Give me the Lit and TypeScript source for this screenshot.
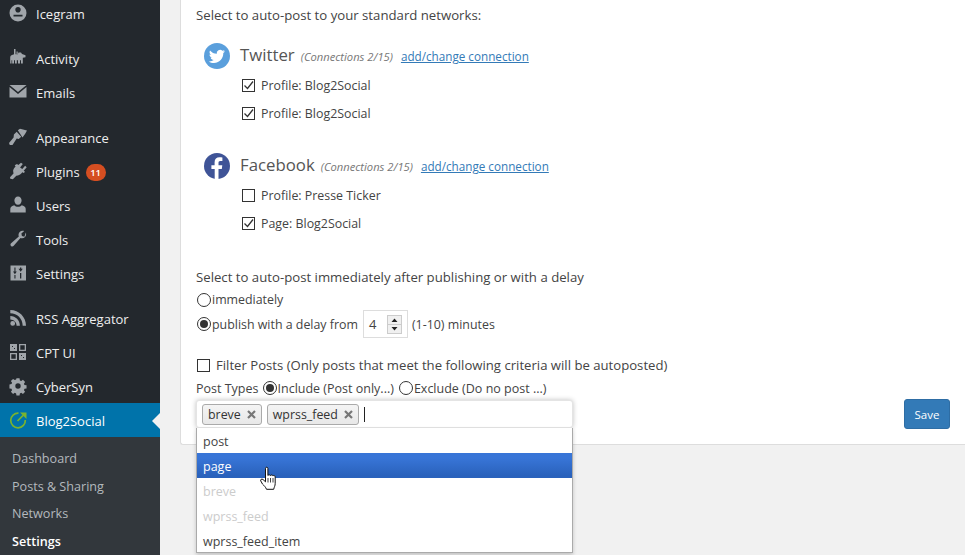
import { LitElement, html, css, svg } from "lit";
import { customElement } from "lit/decorators.js";

const icons: Record<string, unknown> = {
  icegram: svg`<path fill-rule="evenodd" d="M10 1.500a8.500 8.500 0 1 0 0 17 8.500 8.500 0 0 0 0-17zM7.300 6.700a2.700 2.700 0 0 1 5.400 0c0 1.500-1.200 2.900-2.700 2.900S7.300 8.200 7.300 6.700zM5.500 11.800h9v1.600h-9z"/>`,
  activity: svg`<path d="M6 1h1.500v5.300H6zM8.500 3.500h1.200v2.800H8.500zM2.500 8c1-1.200 3-1.700 5.500-1.700l1.700.2.800-2h2.500l1 1.500 3.500 1.300v1.900l-2.700.6v5.700h-1.800v-3.200h-1v3.200H10v-3.200H8.800v3.200H7v-3.200H6v3.200H4.200v-3.200H3.500v3.200H2.200V9.500z"/>`,
  mail: svg`<path d="M1.500 3h17L10 10zM1.500 5l8.500 7 8.500-7v10.500h-17z"/>`,
  brush: svg`<path d="M9.800 3.300L12 1.800l7 1.700-1.800 3.300-2.700 3.800zM8.700 4.800l4.500 5-2.500 2.200-2-.4-4.200 6.400H1.800L1 16l4.600-5.400.3-3z"/>`,
  plug: svg`<path d="M13 1.800l1.800 1.200-2.700 3.400 2.200 1.700 2.800-3.300 1.600 1.400-3 3.500 1.300 1-1.200 1.300-1.400-.7c-1 1.500-2.800 3-4.600 3.100l-1.500.3-3.400 3.500-2.600-.5-.3-1.500 3.500-3.800-.4-2.600c.2-1.500 1.200-3 2.500-4.300l-.9-1.300L9 2.900l1.300 1z"/>`,
  user: svg`<path d="M10 1.500c2.200 0 3.600 1.800 3.600 4s-1.400 4.300-3.600 4.300-3.600-2.100-3.600-4.300 1.400-4 3.600-4zM6.300 10.200c1 1 2.200 1.500 3.700 1.500s2.700-.5 3.700-1.500c2 .5 4 1.700 4 3.500v3.800H2.300v-3.800c0-1.800 2-3 4-3.500z"/>`,
  tool: svg`<path d="M17.800 3.600c.6 1.500.4 3.300-.8 4.500-1.200 1.200-3 1.500-4.500.9L5.700 16.800c-.7.800-1.900.9-2.700.1-.8-.8-.7-2 .1-2.700l7.700-6.800c-.6-1.500-.3-3.300.9-4.500 1.200-1.200 3-1.400 4.500-.8l-2.800 2.500.5 2.500 2.500.7z"/>`,
  settings: svg`<path fill-rule="evenodd" d="M2.500 2.500h15.500v15H2.500zM6.400 4.500v4H5l1.900 2.800L8.800 8.500H7.500v-4zM12 4.500v1.300h-1.500l2.200 3 2.100-3h-1.500V4.500zM6.400 12v3.500h1.100V12zM12 10v5.500h1.300V10z"/>`,
  rss: svg`<path d="M2.300 2c8.700 0 15.700 7 15.700 15.700h-3.300C14.700 10.800 9.200 5.300 2.300 5.300zM2.300 8.100c5.300 0 9.600 4.300 9.600 9.600H8.600c0-3.500-2.800-6.300-6.300-6.300zM4.700 13a2.400 2.400 0 1 1 0 4.800 2.400 2.400 0 0 1 0-4.800z"/>`,
  cpt: svg`<path fill-rule="evenodd" d="M2 2h7v7H2zM4 4v1h1V4zM6 6v1h1V6zM11 2h7v7h-7zM12.300 3.300v4.400h4.400V3.300zM2 11h7v7H2zM3.300 12.300v4.400h4.400v-4.400zM11 11h7v7h-7zM13 13v1h1v-1zM15 15v1h1v-1z"/>`,
  gear: svg`<path fill-rule="evenodd" d="M8.300 1.500h3.400l.4 2.300 1.500.6 1.900-1.300 2.400 2.400-1.300 1.900.6 1.500 2.300.4v3.400l-2.300.4-.6 1.500 1.300 1.900-2.400 2.400-1.900-1.300-1.500.6-.4 2.300H8.300l-.4-2.300-1.500-.6-1.900 1.300-2.400-2.400 1.300-1.900-.6-1.500-2.300-.4V8.300l2.300-.4.6-1.500L2.100 4.500 4.500 2.100l1.900 1.300 1.500-.6zM10 7a3 3 0 1 0 0 6 3 3 0 0 0 0-6z" transform="translate(1 1) scale(.9)"/>`,
};

type Item = { icon: string; label: string; badge?: string; gap?: boolean };
const menu: Item[] = [
  { icon: "icegram", label: "Icegram", gap: true },
  { icon: "activity", label: "Activity" },
  { icon: "mail", label: "Emails", gap: true },
  { icon: "brush", label: "Appearance" },
  { icon: "plug", label: "Plugins", badge: "11" },
  { icon: "user", label: "Users" },
  { icon: "tool", label: "Tools" },
  { icon: "settings", label: "Settings", gap: true },
  { icon: "rss", label: "RSS Aggregator" },
  { icon: "cpt", label: "CPT UI" },
  { icon: "gear", label: "CyberSyn" },
];

const check = (on: boolean, label: string) => html`
  <div class="prof">
    <span class="cb">${on
      ? svg`<svg width="11" height="11" viewBox="0 0 11 11"><path d="M1.500 5.500l3 3 5.500-7" fill="none" stroke="#333" stroke-width="1.300"/></svg>`
      : ""}</span>
    <span>${label}</span>
  </div>`;

const radio = (on: boolean) => html`<span class="radio ${on ? "on" : ""}"></span>`;
const cross = svg`<svg width="11" height="11" viewBox="0 0 11 11"><path d="M2 2l7 7M9 2l-7 7" stroke="#777" stroke-width="2.200"/></svg>`;

@customElement("app-root")
export class AppRoot extends LitElement {
  static styles = css`
    :host { display: block; width: 965px; height: 555px; overflow: hidden; background: #f1f1f1;
      font-family: "Open Sans", "Noto Sans", sans-serif; font-size: 12.400px; color: #444; }
    * { box-sizing: border-box; }
    .layout { display: flex; height: 555px; overflow: hidden; }
    .side { width: 160px; flex: none; background: #23282d; color: #eee; font-size: 13px; height: 555px; overflow: hidden; }
    .menu { margin-top: -4px; }
    .mi { display: flex; align-items: center; height: 34px; padding-top: 2px; }
    .mi.gap { margin-bottom: 11px; }
    .mi svg { width: 20px; height: 20px; margin-left: 8px; margin-right: 8px; fill: #a0a5aa; flex: none; position: relative; top: -1px; }
    .mi.active { background: #0073aa; color: #fff; position: relative; }
    .mi.active::after { content: ""; position: absolute; right: 0; top: 10px; border: 8px solid transparent; border-right-color: #f1f1f1; border-left: 0; }
    .badge { display: inline-flex; align-items: center; justify-content: center; width: 20px; height: 17px; margin-left: 6px; border-radius: 9px; background: #d54e21; color: #fff; font-size: 9.500px; font-weight: 600; }
    .sub { background: #32373c; padding-top: 8px; height: 118px; font-size: 12.600px; color: #b4b9be; }
    .sub div { height: 27.500px; line-height: 27.500px; padding-left: 12px; }
    .sub .cur { color: #fff; font-weight: 600; }

    .main { flex: 1; min-width: 0; padding-left: 20px; height: 445px; }
    .panel { position: relative; height: 445px; background: #fff; border-left: 1px solid #ddd; border-bottom: 1px solid #ddd; border-radius: 0 0 0 3px; padding: 5px 15px 0 15px; }
    .head { height: 20px; line-height: 20px; font-size: 13.200px; }
    .net { margin: 17px 0 0 7px; }
    .net + .net { margin-top: 25px; }
    .nethead { display: flex; align-items: center; height: 28px; }
    .logo { width: 28px; height: 28px; flex: none; margin-right: 9px; }
    .netname { font-size: 16.800px; color: #555; line-height: 24px; margin: 0 6px 3px 0; }
    .conn { font-size: 11.200px; font-style: italic; color: #777; margin-right: 8px; }
    a { font-size: 11.700px; color: #337ab7; text-decoration: underline; }
    .prof { display: flex; align-items: center; gap: 6px; height: 28px; margin-left: 39px; }
    .profs { margin-top: 1px; }
    .cb { width: 13px; height: 13px; border: 1px solid #333; background: #fff; flex: none; display: flex; align-items: center; justify-content: center; }
    .radio { width: 14px; height: 14px; border-radius: 50%; border: 1px solid #333; background: #fff; flex: none; position: relative; display: inline-block; margin-right: 1px; }
    .radio.on::after { content: ""; position: absolute; inset: 2px; border-radius: 50%; background: #333; }
    .delay { margin-top: 30px; }
    .row { display: flex; align-items: center; margin-left: 1px; }
    .r1 { height: 21px; margin-top: 2px; }
    .r2 { height: 28px; }
    .num { display: flex; align-items: center; width: 45px; height: 28px; margin: 0 4px 0 5px; padding-left: 5px; border: 1px solid #ddd; font-size: 13px; }
    .num span { flex: 1; }
    .spin { width: 15px; height: 19px; margin-right: 5px; flex: none; display: block; }
    .filter { display: flex; align-items: center; gap: 6px; height: 20px; margin: 17px 0 0 1px; font-size: 13.150px; }
    .types { display: flex; align-items: center; height: 22px; margin-top: 2px; font-size: 12.500px; }
    .types .lab { margin-right: 5px; }
    .opt { display: flex; align-items: center; margin-right: 5px; }
    .opt .radio { margin-right: 0; }
    .opt + .opt .radio { margin-right: 1px; }
    .chosen { position: absolute; left: 15px; top: 400px; }
    .field { display: flex; align-items: center; gap: 5px; width: 377px; height: 28px; padding-left: 5px; background: #fff; border: 1px solid #e4e4e4; border-radius: 3px; box-shadow: 0 0 5px rgba(0,0,0,.25); }
    .tag { display: flex; align-items: center; justify-content: space-between; height: 21px; padding: 0 4px 0 5px; border: 1px solid #aaa; border-radius: 3px; background: linear-gradient(#f4f4f4, #e8e8e8); color: #333; font-size: 12.400px; }
    .tag svg { margin-left: 5px; }
    .caret { width: 1px; height: 15px; background: #222; }
    .drop { width: 377px; height: 125px; background: #fff; border: 1px solid #aaa; border-top: 0; box-shadow: 0 2px 4px rgba(0,0,0,.2); font-size: 12.500px; color: #444; }
    .drop div { height: 25px; line-height: 27px; padding-left: 6px; }
    .drop .hi { background: linear-gradient(#3875d7 20%, #2a62bc 90%); color: #fff; }
    .drop .off { color: #ccc; }
    .hand { position: absolute; left: 79px; top: 466px; width: 18px; height: 26px; }
    .save { position: absolute; left: 723px; top: 399px; width: 46px; height: 30px; background: #337ab7; border: 1px solid #2e6da4; border-radius: 3px; color: #fff; font-size: 11.500px; display: flex; align-items: center; justify-content: center; }
  `;

  render() {
    return html`
      <div class="layout">
        <nav class="side">
          <div class="menu">
            ${menu.map(
              (m) => html`
                <div class="mi ${m.gap ? "gap" : ""}">
                  <svg viewBox="0 0 20 20">${icons[m.icon]}</svg>
                  <span>${m.label}</span>
                  ${m.badge ? html`<span class="badge">${m.badge}</span>` : ""}
                </div>`
            )}
            <div class="mi active">
              <svg viewBox="0 0 20 20" style="fill:none">
                <path d="M10.500 3.200A7.300 7.300 0 1 0 17.300 10" stroke="#7ab32e" stroke-width="1.700" fill="none"/>
                <path d="M9.500 11l6-6" stroke="#7ab32e" stroke-width="1.700" fill="none"/>
                <path d="M12 2.500h6.500V9z" fill="#7ab32e"/>
              </svg>
              <span>Blog2Social</span>
            </div>
          </div>
          <div class="sub">
            <div>Dashboard</div>
            <div>Posts &amp; Sharing</div>
            <div>Networks</div>
            <div class="cur">Settings</div>
          </div>
        </nav>
        <main class="main">
          <section class="panel">
            <div class="head">Select to auto-post to your standard networks:</div>

            <div class="net">
              <div class="nethead">
                <svg class="logo" viewBox="0 0 28 28">
                  <circle cx="14" cy="14" r="13" fill="#5a9fdc"/>
                  <path fill="#fff" d="M22 9.300c-.6.300-1.200.4-1.900.5.700-.4 1.200-1 1.400-1.800-.6.400-1.300.6-2.100.8a3.300 3.300 0 0 0-5.600 3c-2.700-.1-5.100-1.400-6.800-3.400-.9 1.500-.4 3.400 1 4.400-.5 0-1-.2-1.500-.4 0 1.600 1.100 2.900 2.600 3.200-.5.100-1 .2-1.500.1.400 1.300 1.600 2.200 3.100 2.300-1.400 1.100-3.200 1.600-4.900 1.400 1.500 1 3.200 1.500 5.100 1.500 6.100 0 9.600-5.200 9.400-9.900.7-.5 1.200-1 1.700-1.700z"/>
                </svg>
                <span class="netname">Twitter</span>
                <span class="conn">(Connections 2/15)</span>
                <a>add/change connection</a>
              </div>
              <div class="profs">
                ${check(true, "Profile: Blog2Social")}
                ${check(true, "Profile: Blog2Social")}
              </div>
            </div>

            <div class="net">
              <div class="nethead">
                <svg class="logo" viewBox="0 0 28 28">
                  <circle cx="14" cy="14" r="13" fill="#3f5497"/>
                  <path fill="#fff" d="M15.500 27v-10h3.300l.5-3.800h-3.800v-2.400c0-1.100.3-1.900 1.900-1.900h2V5.500c-.4 0-1.500-.2-2.900-.2-2.900 0-4.900 1.800-4.900 5v3H8.400V17h3.300v10z"/>
                </svg>
                <span class="netname">Facebook</span>
                <span class="conn">(Connections 2/15)</span>
                <a>add/change connection</a>
              </div>
              <div class="profs">
                ${check(false, "Profile: Presse Ticker")}
                ${check(true, "Page: Blog2Social")}
              </div>
            </div>

            <div class="delay head">Select to auto-post immediately after publishing or with a delay</div>
            <div class="row r1">${radio(false)}<span>immediately</span></div>
            <div class="row r2">
              ${radio(true)}<span>publish with a delay from</span>
              <span class="num">
                <span>4</span>
                <svg class="spin" viewBox="0 0 15 19">
                  <rect x=".5" y=".5" width="14" height="18" fill="#f0f0f0" stroke="#ccc"/>
                  <line x1="0" y1="9.500" x2="15" y2="9.500" stroke="#ccc"/>
                  <path d="M7.500 3.500l3 3.500h-6zM7.500 15.500l3-3.500h-6z" fill="#222"/>
                </svg>
              </span>
              <span>(1-10) minutes</span>
            </div>
            <div class="filter">
              <span class="cb"></span>
              <span>Filter Posts (Only posts that meet the following criteria will be autoposted)</span>
            </div>
            <div class="types">
              <span class="lab">Post Types</span>
              <span class="opt">${radio(true)}<span>Include (Post only...)</span></span>
              <span class="opt">${radio(false)}<span>Exclude (Do no post ...)</span></span>
            </div>

            <div class="chosen">
              <div class="field">
                <span class="tag">breve ${cross}</span>
                <span class="tag">wprss_feed ${cross}</span>
                <span class="caret"></span>
              </div>
              <div class="drop">
                <div>post</div>
                <div class="hi">page</div>
                <div class="off">breve</div>
                <div class="off">wprss_feed</div>
                <div>wprss_feed_item</div>
              </div>
            </div>
            <svg class="hand" viewBox="0 0 18 26">
              <path fill="#fff" stroke="#111" stroke-width="1" d="M5.500 2.500c0-1.700 2.400-1.700 2.400 0v7c.6-.9 2.200-.9 2.500 0 .6-.8 2.200-.7 2.500.3.700-.6 2.300-.2 2.300 1v6.500c0 2.800-1 3.500-1.500 6H6.500c-.9-2.300-2.300-3.600-4-5.200L.8 15c-.8-1.200.9-2.700 2.200-1.500l2.500 2.300z"/>
              <path d="M8 12v4.500M10.500 12v4.500M13 12v4.500" stroke="#111" stroke-width=".8"/>
            </svg>
            <div class="save">Save</div>
          </section>
        </main>
      </div>
    `;
  }
}
